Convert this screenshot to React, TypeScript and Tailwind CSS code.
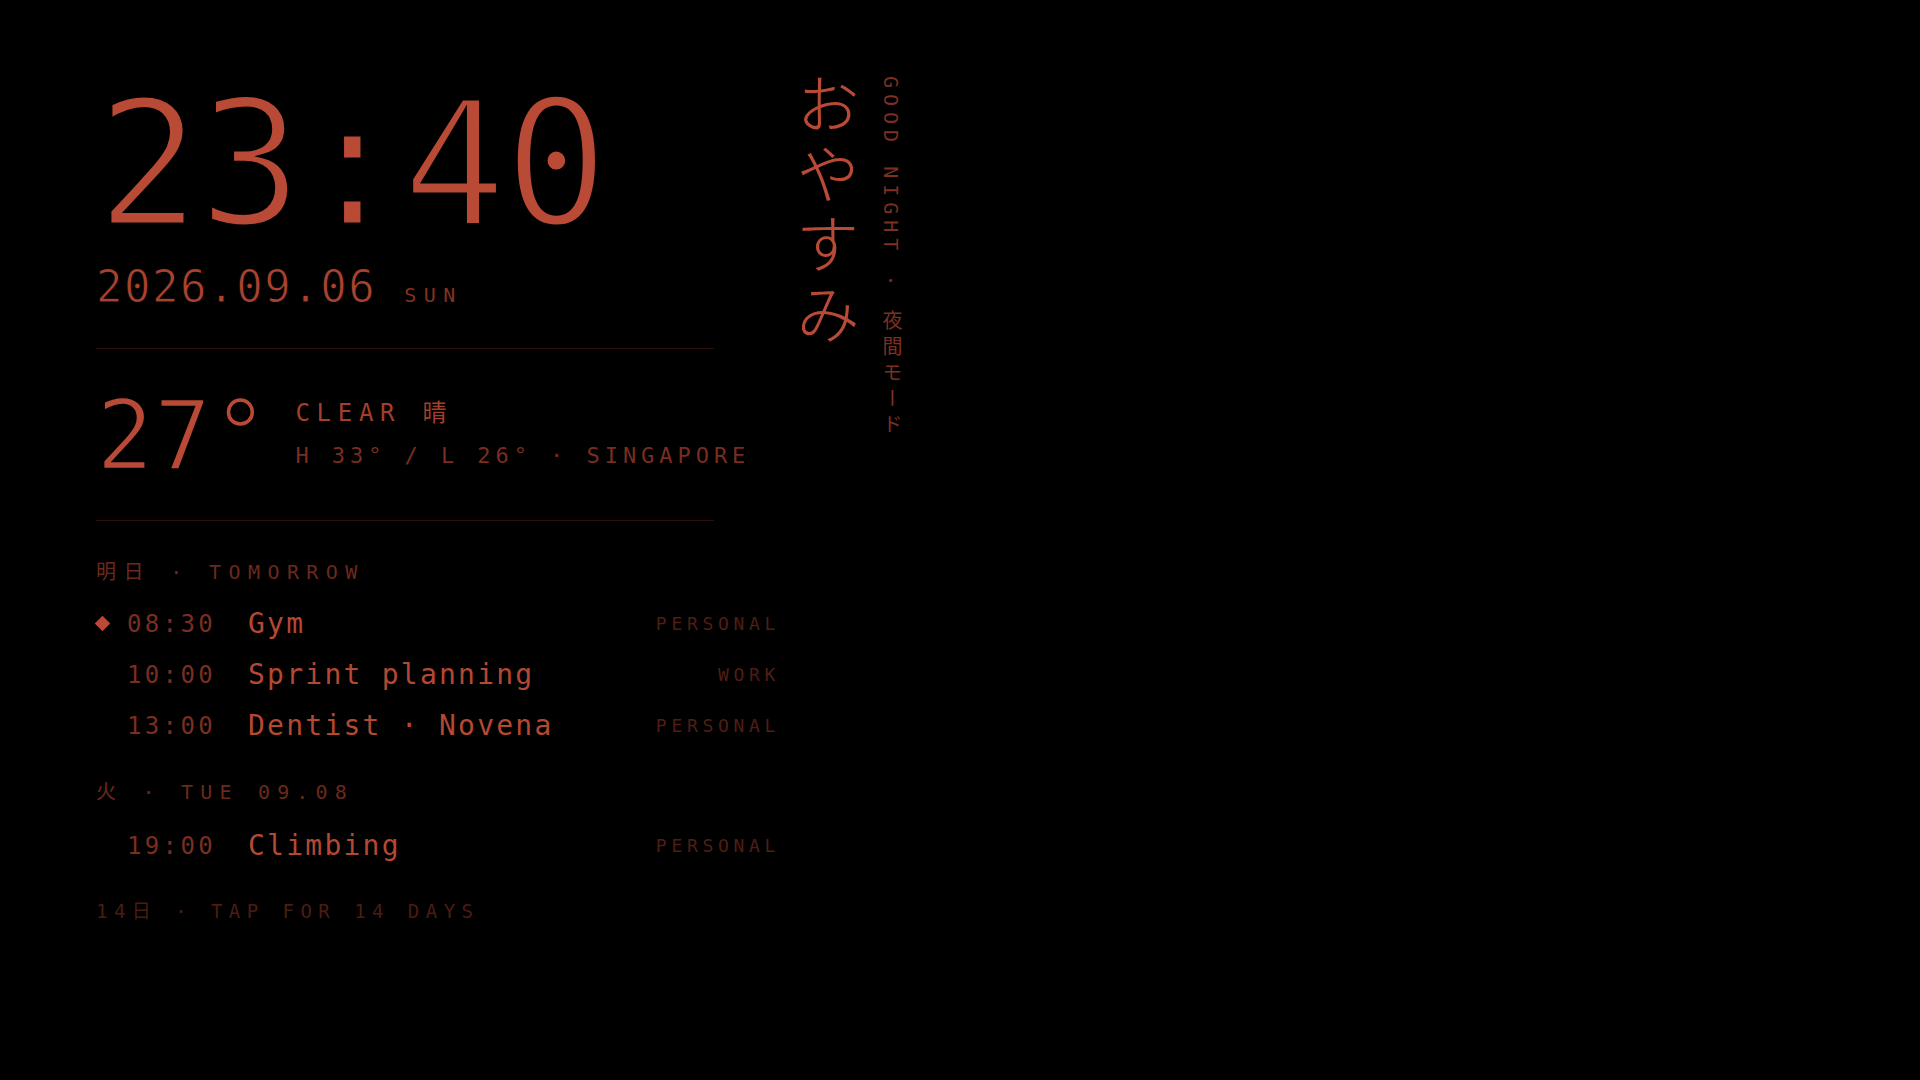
import React from 'react'

type Item = { time: string; title: string; tag: string; next?: boolean }

const tomorrow: Item[] = [
  { time: '08:30', title: 'Gym', tag: 'PERSONAL', next: true },
  { time: '10:00', title: 'Sprint planning', tag: 'WORK' },
  { time: '13:00', title: 'Dentist · Novena', tag: 'PERSONAL' },
]

const tuesday: Item[] = [{ time: '19:00', title: 'Climbing', tag: 'PERSONAL' }]

function EventRow({ item }: { item: Item }) {
  return (
    <div className="flex h-[51px] items-center">
      <div className="flex w-[31px] items-center">
        {item.next && <span className="ml-[1px] block h-[11px] w-[11px] rotate-45 bg-[#b94a35]" />}
      </div>
      <span className="w-[121px] text-[24px] leading-none tracking-[0.14em] text-[#7a2e20]">{item.time}</span>
      <span className="flex-1 text-[28px] leading-none tracking-[0.08em] text-[#b54832]">{item.title}</span>
      <span className="text-[18px] leading-none tracking-[0.26em] text-[#4f1e14]">{item.tag}</span>
    </div>
  )
}

export default function App() {
  return (
    <div className="min-h-screen w-full bg-black font-['DejaVu_Sans_Mono','Noto_Sans_CJK_JP',monospace]">
      <div className="flex items-start pl-[96px] pt-[76px]">
        {/* left column: clock, weather, agenda */}
        <div className="flex w-[684px] flex-col">
          {/* black stroke thins the regular-weight glyphs down to the light look */}
          <div className="mt-[2px] text-[174px] leading-none tracking-[-0.016em] text-[#b94a35] [-webkit-text-stroke:5px_black]">
            23:40
          </div>

          <div className="mt-[13px] flex items-baseline">
            <span className="text-[44px] leading-none tracking-[0.035em] text-[#a9432f] [-webkit-text-stroke:1px_black]">
              2026.09.06
            </span>
            <span className="ml-[28px] text-[20px] leading-none tracking-[0.37em] text-[#83321f]">SUN</span>
          </div>

          <div className="mt-[39px] h-px w-[618px] bg-[#2a0f0a]" />

          <div className="mt-[39px] flex">
            <span className="text-[96px] leading-none text-[#b94a35] [-webkit-text-stroke:2.5px_black]">27°</span>
            <div className="ml-[26px] flex flex-col pt-[13px]">
              <span className="text-[24px] leading-none tracking-[0.28em] text-[#a33f2c]">CLEAR 晴</span>
              <span className="mt-[20px] text-[22px] leading-none tracking-[0.225em] text-[#792d20]">
                H 33° / L 26° · SINGAPORE
              </span>
            </div>
          </div>

          <div className="mt-[36px] h-px w-[618px] bg-[#2a0f0a]" />

          <div className="mt-[41px] text-[20px] leading-none tracking-[0.37em] text-[#6b291d]">明日 · TOMORROW</div>
          <div className="mt-[16px] flex flex-col">
            {tomorrow.map((item) => (
              <EventRow key={item.time} item={item} />
            ))}
          </div>

          <div className="mt-[31px] text-[20px] leading-none tracking-[0.36em] text-[#6b291d]">火 · TUE 09.08</div>
          <div className="mt-[18px] flex flex-col">
            {tuesday.map((item) => (
              <EventRow key={item.time} item={item} />
            ))}
          </div>

          <div className="mt-[31px] text-[19px] leading-none tracking-[0.34em] text-[#4c1c13]">14日 · TAP FOR 14 DAYS</div>
        </div>

        {/* vertical greeting */}
        <div className="ml-[10px] flex items-start gap-[27px]">
          <div className="-mt-[4px] text-[64px] font-light leading-none tracking-[0.09em] text-[#b94a35] [writing-mode:vertical-rl]">
            おやすみ
          </div>
          <div className="text-[20px] leading-none tracking-[0.3em] text-[#7d3022] [writing-mode:vertical-rl]">
            GOOD NIGHT · 夜間モード
          </div>
        </div>
      </div>
    </div>
  )
}
